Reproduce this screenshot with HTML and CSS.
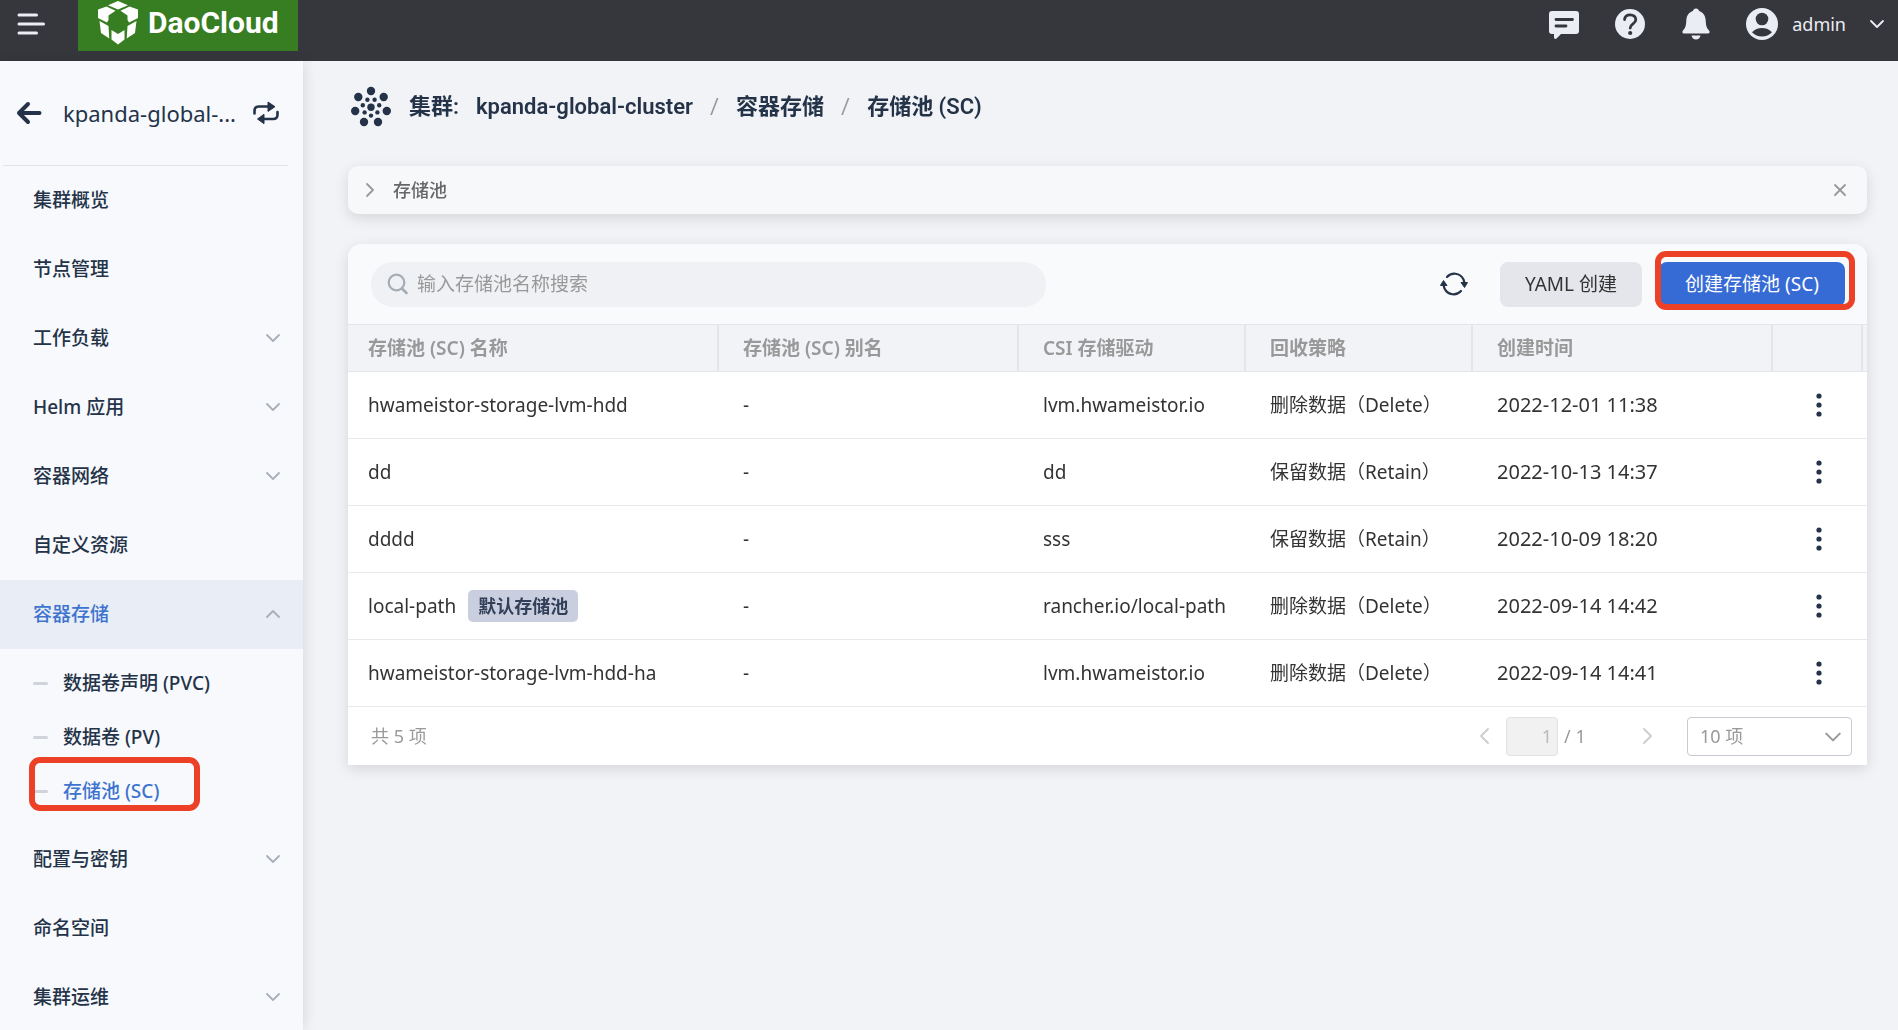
FILE: index.html
```html
<!DOCTYPE html>
<html lang="zh-CN">
<head>
<meta charset="utf-8">
<title>存储池 (SC)</title>
<link rel="stylesheet" href="styles.css">
</head>
<body>
<svg class="sprite" aria-hidden="true">
  <symbol id="chevron" viewBox="0 0 16 16"><path d="M2 5l6 6 6-6" fill="none" stroke="currentColor" stroke-width="1.8" stroke-linecap="round" stroke-linejoin="round"/></symbol>
  <symbol id="chevron-up" viewBox="0 0 16 16"><path d="M2 11l6-6 6 6" fill="none" stroke="currentColor" stroke-width="1.8" stroke-linecap="round" stroke-linejoin="round"/></symbol>
  <symbol id="dots" viewBox="0 0 6 24"><circle cx="3" cy="3" r="2.6"/><circle cx="3" cy="12" r="2.6"/><circle cx="3" cy="21" r="2.6"/></symbol>
</svg>

<header class="topbar">
  <button class="icon-btn menu-btn" aria-label="菜单">
    <svg width="28" height="24" viewBox="0 0 28 24"><path d="M2 3h17.5M2 12h24.5M2 21h17.5" stroke="currentColor" stroke-width="3" stroke-linecap="round"/></svg>
  </button>
  <a class="logo" href="#">
    <svg width="42" height="46" viewBox="0 0 42 46" fill="#fff">
      <path d="M21 1l10 4.200L21 9.500 11 5.200z"/>
      <path d="M9.500 6.500l9 4.200-7 4.800v4.500L10 22.500 1 18V9.500z"/>
      <path d="M32.500 6.500l-9 4.200 7 4.800v4.500L32 22.500l9-4.500V9.500z"/>
      <path d="M2.500 21l9 5 .8 12.500-8.300-5.500z"/>
      <path d="M39.500 21l-9 5-.8 12.500 8.300-5.500z"/>
      <path d="M14.500 30l6.500 4 6.500-4v9.500L21 44.500l-6.500-5z"/>
    </svg>
    <span class="logo-text">DaoCloud</span>
  </a>
  <nav class="top-actions">
    <button class="icon-btn" aria-label="消息">
      <svg width="32" height="32" viewBox="0 0 32 32"><path d="M4 3h24a3 3 0 0 1 3 3v17a3 3 0 0 1-3 3H13l-4.500 4.500c-1 .8-2.500.4-2.500-1V26H4a3 3 0 0 1-3-3V6a3 3 0 0 1 3-3z" fill="currentColor"/><path d="M8 11.500h16.500M8 18h10" stroke="#36373c" stroke-width="2.800" stroke-linecap="round"/></svg>
    </button>
    <button class="icon-btn" aria-label="帮助">
      <svg width="32" height="32" viewBox="0 0 32 32"><circle cx="16" cy="16" r="15" fill="currentColor"/><path d="M10.500 11.500c.4-3 2.600-4.700 5.600-4.700 3.300 0 5.700 2 5.700 5 0 4-5.600 4.300-5.600 8.200" fill="none" stroke="#36373c" stroke-width="2.800" stroke-linecap="round"/><circle cx="16.200" cy="25" r="2.100" fill="#36373c"/></svg>
    </button>
    <button class="icon-btn" aria-label="通知">
      <svg width="32" height="32" viewBox="0 0 32 32" fill="currentColor"><path d="M16 .5c-1.800 0-2.800 1.200-3 2.600C8.700 4.400 6.500 8 6.300 12.500 6 18.500 5.200 20 3 22.500c-1.200 1.500-.6 3 1 3h24c1.600 0 2.200-1.500 1-3-2.200-2.500-3-4-3.300-10C25.500 8 23.300 4.400 19 3.100 18.800 1.700 17.800.5 16 .5z"/><path d="M11.500 27.500h9c-.5 2.500-2.300 4-4.500 4s-4-1.500-4.500-4z"/></svg>
    </button>
    <button class="user-btn">
      <svg width="32" height="32" viewBox="0 0 32 32"><circle cx="16" cy="16" r="16" fill="currentColor"/><circle cx="16" cy="11" r="6.300" fill="#36373c"/><path d="M6 24.300c5-5.700 15-5.700 20 0-5 5.600-15 5.600-20 0z" fill="#36373c"/></svg>
      <span>admin</span>
      <svg class="user-caret" width="16" height="16"><use href="#chevron"/></svg>
    </button>
  </nav>
</header>

<div class="body">
  <aside class="sidebar">
    <div class="side-head">
      <a class="back" href="#" aria-label="返回"><svg width="26" height="24" viewBox="0 0 26 24"><path d="M12 3L3 12l9 9M3 12h20.500" fill="none" stroke="currentColor" stroke-width="4" stroke-linecap="round" stroke-linejoin="round"/></svg></a>
      <span class="cluster-name">kpanda-global-...</span>
      <button class="icon-btn swap" aria-label="切换集群"><svg width="26" height="24" viewBox="0 0 26 24"><path d="M1.500 12.500V10c0-2.800 1.500-4.500 4.300-4.500H16M24.500 11v2.500c0 2.800-1.500 4.500-4.300 4.500H10" fill="none" stroke="currentColor" stroke-width="2.600" stroke-linecap="round"/><path d="M15 1l7 4.700-7 4.700zM11 13.300L4.500 18l6.500 4.700z" fill="currentColor" stroke="currentColor" stroke-linejoin="round"/></svg></button>
    </div>
    <nav class="menu">
      <a href="#">集群概览</a>
      <a href="#">节点管理</a>
      <a href="#">工作负载<svg width="16" height="16"><use href="#chevron"/></svg></a>
      <a href="#">Helm 应用<svg width="16" height="16"><use href="#chevron"/></svg></a>
      <a href="#">容器网络<svg width="16" height="16"><use href="#chevron"/></svg></a>
      <a href="#">自定义资源</a>
      <a href="#" class="active">容器存储<svg width="16" height="16"><use href="#chevron-up"/></svg></a>
      <div class="submenu">
        <a href="#">数据卷声明 (PVC)</a>
        <a href="#">数据卷 (PV)</a>
        <a href="#" class="current">存储池 (SC)<span class="mark mark-menu"></span></a>
      </div>
      <a href="#">配置与密钥<svg width="16" height="16"><use href="#chevron"/></svg></a>
      <a href="#">命名空间</a>
      <a href="#">集群运维<svg width="16" height="16"><use href="#chevron"/></svg></a>
    </nav>
  </aside>

  <main class="main">
    <h1 class="crumbs">
      <svg width="42" height="42" viewBox="0 0 42 42" fill="currentColor">
        <circle cx="21" cy="5" r="4.200"/><circle cx="8.300" cy="11" r="4.200"/><circle cx="33.700" cy="11" r="4.200"/><circle cx="5.200" cy="25" r="4.200"/><circle cx="36.800" cy="25" r="4.200"/><circle cx="14" cy="36" r="4.200"/><circle cx="28" cy="36" r="4.200"/>
        <circle cx="21" cy="21.200" r="3.700"/><circle cx="17.400" cy="13.800" r="2.200"/><circle cx="24.600" cy="13.800" r="2.200"/><circle cx="12.800" cy="19.300" r="2.200"/><circle cx="29.200" cy="19.300" r="2.200"/><circle cx="14.600" cy="26.400" r="2.200"/><circle cx="27.400" cy="26.400" r="2.200"/><circle cx="21" cy="29.600" r="2.200"/>
      </svg>
      <span>集群:</span>
      <a href="#">kpanda-global-cluster</a>
      <span class="sep">/</span>
      <a href="#">容器存储</a>
      <span class="sep">/</span>
      <span>存储池 (SC)</span>
    </h1>

    <section class="notice">
      <button class="icon-btn expand" aria-label="展开"><svg width="12" height="16" viewBox="0 0 12 16"><path d="M3 2l6 6-6 6" fill="none" stroke="currentColor" stroke-width="1.800" stroke-linecap="round" stroke-linejoin="round"/></svg></button>
      <span class="notice-title">存储池</span>
      <button class="icon-btn close" aria-label="关闭"><svg width="14" height="14" viewBox="0 0 14 14"><path d="M2 2l10 10M12 2L2 12" stroke="currentColor" stroke-width="1.800" stroke-linecap="round"/></svg></button>
    </section>

    <section class="panel">
      <div class="toolbar">
        <label class="search">
          <svg width="22" height="22" viewBox="0 0 22 22"><circle cx="9.500" cy="9.500" r="7.800" fill="none" stroke="currentColor" stroke-width="2.200"/><path d="M15 15.500l4.500 4.500" stroke="currentColor" stroke-width="2.600" stroke-linecap="round"/></svg>
          <input type="text" placeholder="输入存储池名称搜索" aria-label="搜索">
        </label>
        <button class="icon-btn refresh" aria-label="刷新"><svg width="28" height="26" viewBox="0 0 28 26"><path d="M7 6C11.500 1 20 1.500 23.500 8.500L24.500 12M21 20C16.500 25 8 24.500 4.500 17.500L3.500 14" fill="none" stroke="currentColor" stroke-width="2.200" stroke-linecap="round"/><path d="M21 11.500h6.500l-3 5zM.5 14.500H7l-3.500-5z" fill="currentColor" stroke="currentColor" stroke-linejoin="round"/></svg></button>
        <button class="btn">YAML 创建</button>
        <div class="marked"><button class="btn primary">创建存储池 (SC)</button><span class="mark mark-create"></span></div>
      </div>

      <table class="grid">
        <colgroup><col class="c-name"><col class="c-time"><col class="c-mid"><col class="c-mid"><col class="c-time"><col class="c-act"><col class="c-end"></colgroup>
        <thead><tr><th>存储池 (SC) 名称</th><th>存储池 (SC) 别名</th><th>CSI 存储驱动</th><th>回收策略</th><th>创建时间</th><th></th><th></th></tr></thead>
        <tbody>
          <tr><td>hwameistor-storage-lvm-hdd</td><td>-</td><td>lvm.hwameistor.io</td><td>删除数据（Delete）</td><td class="date">2022-12-01 11:38</td><td class="act"><button class="icon-btn" aria-label="更多"><svg width="6" height="24"><use href="#dots"/></svg></button></td><td></td></tr>
          <tr><td>dd</td><td>-</td><td>dd</td><td>保留数据（Retain）</td><td class="date">2022-10-13 14:37</td><td class="act"><button class="icon-btn" aria-label="更多"><svg width="6" height="24"><use href="#dots"/></svg></button></td><td></td></tr>
          <tr><td>dddd</td><td>-</td><td>sss</td><td>保留数据（Retain）</td><td class="date">2022-10-09 18:20</td><td class="act"><button class="icon-btn" aria-label="更多"><svg width="6" height="24"><use href="#dots"/></svg></button></td><td></td></tr>
          <tr><td>local-path<span class="tag">默认存储池</span></td><td>-</td><td>rancher.io/local-path</td><td>删除数据（Delete）</td><td class="date">2022-09-14 14:42</td><td class="act"><button class="icon-btn" aria-label="更多"><svg width="6" height="24"><use href="#dots"/></svg></button></td><td></td></tr>
          <tr><td>hwameistor-storage-lvm-hdd-ha</td><td>-</td><td>lvm.hwameistor.io</td><td>删除数据（Delete）</td><td class="date">2022-09-14 14:41</td><td class="act"><button class="icon-btn" aria-label="更多"><svg width="6" height="24"><use href="#dots"/></svg></button></td><td></td></tr>
        </tbody>
      </table>

      <footer class="pager">
        <span class="total">共 5 项</span>
        <button class="icon-btn arrow" aria-label="上一页" disabled><svg width="12" height="18" viewBox="0 0 12 18"><path d="M10 2L3 9l7 7" fill="none" stroke="currentColor" stroke-width="1.800" stroke-linecap="round" stroke-linejoin="round"/></svg></button>
        <input class="page-no" type="text" value="1" aria-label="页码" disabled>
        <span class="pages">/ 1</span>
        <button class="icon-btn arrow" aria-label="下一页" disabled><svg width="12" height="18" viewBox="0 0 12 18"><path d="M2 2l7 7-7 7" fill="none" stroke="currentColor" stroke-width="1.800" stroke-linecap="round" stroke-linejoin="round"/></svg></button>
        <div class="size-box">
          <select aria-label="每页条数"><option>10 项</option></select>
          <svg width="18" height="18"><use href="#chevron"/></svg>
        </div>
      </footer>
    </section>
  </main>
</div>
</body>
</html>
```
FILE: styles.css
```css
* { box-sizing: border-box; }

body {
  margin: 0;
  height: 100vh;
  display: flex;
  flex-direction: column;
  overflow: hidden;
  background: #f1f3f7;
  color: #333;
  font: 19px/28px "Noto Sans", "Noto Sans CJK SC", sans-serif;
}

a { color: inherit; text-decoration: none; }
button, input, select { font: inherit; color: inherit; }
svg { display: block; flex: none; }

.sprite { display: none; }

.icon-btn {
  padding: 0;
  border: 0;
  background: none;
  display: flex;
  align-items: center;
  justify-content: center;
  flex: none;
}

/* Top bar */
.topbar {
  flex: none;
  height: 61px;
  padding: 0 13px 0 17px;
  display: flex;
  align-items: flex-start;
  background: #36373c;
  color: #eaedf4;
}
.menu-btn { height: 47px; }
.logo {
  width: 220px;
  height: 51px;
  margin-left: 33px;
  padding: 0 0 6px 19px;
  display: flex;
  align-items: center;
  gap: 9px;
  background: #377d22;
}
.logo-text {
  color: #fff;
  font: 700 30px/44px Roboto, sans-serif;
}
.top-actions {
  height: 47px;
  margin-left: auto;
  display: flex;
  align-items: center;
  gap: 34px;
}
.user-btn {
  padding: 0;
  border: 0;
  background: none;
  display: flex;
  align-items: center;
  gap: 14px;
  font-size: 18px;
}
.user-caret { margin-left: 9px; }

.body { flex: 1; min-height: 0; display: flex; }

/* Sidebar */
.sidebar {
  flex: none;
  width: 303px;
  overflow-y: auto;
  scrollbar-width: none;
  background: #f7f9fd;
  color: #243348;
  box-shadow: 2px 0 12px rgba(0, 0, 0, .1);
}
.side-head {
  height: 105px;
  margin: 0 15px 0 3px;
  padding: 0 9px 0 13px;
  display: flex;
  align-items: center;
  border-bottom: 1px solid #e3e5ea;
}
.cluster-name { flex: 1; margin-left: 21px; font-size: 22px; white-space: nowrap; }
.menu { display: flex; flex-direction: column; font-weight: 500; }
.menu > a {
  height: 69px;
  padding: 0 22px 2px 33px;
  display: flex;
  align-items: center;
  justify-content: space-between;
}
.menu > a svg { color: #a9afb8; }
.menu > .active { background: #e9edf5; color: #3e74cf; }
.submenu { padding: 7px 0; }
.submenu a {
  position: relative;
  height: 54px;
  padding-left: 33px;
  display: flex;
  align-items: center;
  gap: 15px;
}
.submenu a::before { content: ""; width: 15px; height: 3px; border-radius: 2px; background: #d0d2dc; }
.submenu .current { color: #3e74cf; }

/* Red highlight frames */
.mark {
  position: absolute;
  border: 6px solid #ec4027;
  border-radius: 11px;
  pointer-events: none;
}
.mark-menu { left: 29px; top: -7px; width: 171px; height: 54px; }
.mark-create { left: -4px; right: -10px; top: -11px; bottom: -3px; }

/* Content */
.main { flex: 1; min-width: 0; padding: 24px 31px 0 45px; }
.crumbs {
  margin: 0;
  height: 44px;
  padding-left: 2px;
  display: flex;
  align-items: center;
  gap: 17px;
  color: #243348;
  font: 600 22px/32px Roboto, "Noto Sans CJK SC", sans-serif;
}
.crumbs .sep { color: #999; font-weight: 400; }

.notice, .panel { box-shadow: 0 4px 14px rgba(0, 0, 0, .12); }
.notice {
  height: 48px;
  margin-top: 37px;
  padding: 0 20px 0 16px;
  display: flex;
  align-items: center;
  border-radius: 10px;
  background: #f7f8fa;
  color: #666;
}
.notice-title { margin: 0 auto 0 17px; font-size: 18px; font-weight: 500; }
.expand, .close { color: #999; }

.panel { margin-top: 30px; border-radius: 14px 14px 0 0; background: #fff; }
.toolbar {
  height: 80px;
  padding: 0 22px 0 23px;
  display: flex;
  align-items: center;
  border-radius: 14px 14px 0 0;
  background: #f9fafc;
}
.search {
  flex: 0 1 675px;
  height: 45px;
  margin-right: auto;
  padding: 0 16px;
  display: flex;
  align-items: center;
  gap: 8px;
  border-radius: 22px;
  background: #eff1f4;
  color: #a6acb4;
}
.search input { flex: 1; min-width: 0; padding: 0; border: 0; outline: 0; background: none; }
.search input::placeholder { color: #999; opacity: 1; }
.refresh { margin-right: 32px; color: #243348; }
.btn {
  min-width: 142px;
  height: 45px;
  padding: 0 22px;
  border: 0;
  border-radius: 8px;
  background: #e5e6eb;
  color: #333;
  white-space: nowrap;
}
.primary { min-width: 186px; background: #366bd6; color: #fff; }
.marked { position: relative; margin-left: 17px; display: flex; }

.grid { width: 100%; table-layout: fixed; border-collapse: separate; border-spacing: 0; }
.c-name { width: 371px; }
.c-time { width: 300px; }
.c-mid { width: 227px; }
.c-act { width: 90px; }
.c-end { width: 4px; }
th, td { padding: 0 0 0 24px; text-align: left; white-space: nowrap; }
th:first-child, td:first-child { padding-left: 20px; }
th:last-child, td:last-child { padding: 0; }
th {
  height: 48px;
  border-top: 1px solid #e3e5e9;
  border-bottom: 1px solid #e3e5e9;
  border-right: 2px solid #e3e5e9;
  background: #f1f3f7;
  color: #999;
  font-weight: 600;
}
th:last-child { border-right: 0; }
td { height: 67px; border-bottom: 1px solid #e8e9ec; }
.date { font-size: 20px; }
td.act { padding-left: 43px; color: #243348; }
.act svg { fill: currentColor; }
.tag {
  display: inline-block;
  margin-left: 12px;
  padding: 2px 10px;
  border-radius: 5px;
  background: #c9cfdf;
  color: #334059;
  font-size: 18px;
  font-weight: 600;
}

.pager {
  height: 58px;
  padding: 0 15px 0 23px;
  display: flex;
  align-items: center;
  color: #999;
  font-size: 18px;
}
.total { margin-right: auto; }
.arrow { color: #ccc; }
.page-no {
  width: 52px;
  height: 39px;
  margin: 0 6px 0 16px;
  padding: 0 5px;
  border: 1px solid #e2e2e2;
  border-radius: 4px;
  background: #f1f1f1;
  color: #bbb;
  text-align: right;
}
.pages { width: 78px; }
.size-box { position: relative; width: 165px; margin-left: 33px; }
.size-box select {
  display: block;
  appearance: none;
  width: 100%;
  height: 39px;
  padding: 0 12px;
  border: 1px solid #c9c9d4;
  border-radius: 4px;
  background: #fff;
}
.size-box svg { position: absolute; right: 10px; top: 11px; pointer-events: none; }
```
